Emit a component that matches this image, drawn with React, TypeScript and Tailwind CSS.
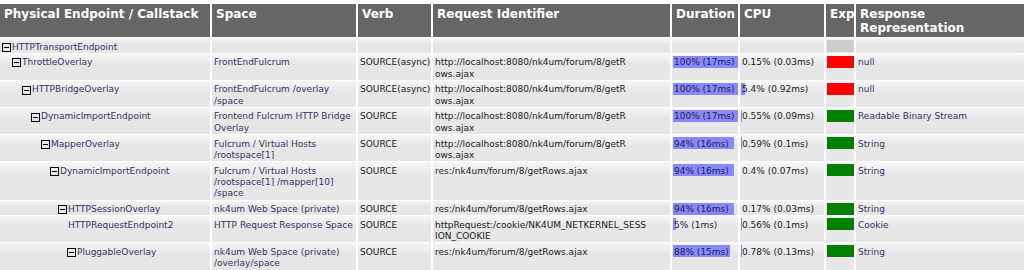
import React from 'react';

type Exp = 'gray' | 'red' | 'green';

interface Row {
  indent: number;
  name: string;
  leaf?: boolean;
  space: string[];
  verb: string;
  req: string[];
  dur?: [string, number];
  cpu?: [string, number];
  exp: Exp;
  resp: string;
}

const URL = ['http://localhost:8080/nk4um/forum/8/getR', 'ows.ajax'];
const RES = ['res:/nk4um/forum/8/getRows.ajax'];

const rows: Row[] = [
  { indent: 1, name: 'HTTPTransportEndpoint', space: [], verb: '', req: [], exp: 'gray', resp: '' },
  { indent: 12, name: 'ThrottleOverlay', space: ['FrontEndFulcrum'], verb: 'SOURCE(async)', req: URL, dur: ['100% (17ms)', 65], cpu: ['0.15% (0.03ms)', 0], exp: 'red', resp: 'null' },
  { indent: 22, name: 'HTTPBridgeOverlay', space: ['FrontEndFulcrum /overlay', '/space'], verb: 'SOURCE(async)', req: URL, dur: ['100% (17ms)', 65], cpu: ['5.4% (0.92ms)', 4], exp: 'red', resp: 'null' },
  { indent: 31, name: 'DynamicImportEndpoint', space: ['Frontend Fulcrum HTTP Bridge', 'Overlay'], verb: 'SOURCE', req: URL, dur: ['100% (17ms)', 65], cpu: ['0.55% (0.09ms)', 1], exp: 'green', resp: 'Readable Binary Stream' },
  { indent: 41, name: 'MapperOverlay', space: ['Fulcrum / Virtual Hosts', '/rootspace[1]'], verb: 'SOURCE', req: URL, dur: ['94% (16ms)', 61], cpu: ['0.59% (0.1ms)', 1], exp: 'green', resp: 'String' },
  { indent: 50, name: 'DynamicImportEndpoint', space: ['Fulcrum / Virtual Hosts', '/rootspace[1] /mapper[10]', '/space'], verb: 'SOURCE', req: RES, dur: ['94% (16ms)', 61], cpu: ['0.4% (0.07ms)', 0], exp: 'green', resp: 'String' },
  { indent: 58, name: 'HTTPSessionOverlay', space: ['nk4um Web Space (private)'], verb: 'SOURCE', req: RES, dur: ['94% (16ms)', 61], cpu: ['0.17% (0.03ms)', 0], exp: 'green', resp: 'String' },
  { indent: 68, name: 'HTTPRequestEndpoint2', leaf: true, space: ['HTTP Request Response Space'], verb: 'SOURCE', req: ['httpRequest:/cookie/NK4UM_NETKERNEL_SESS', 'ION_COOKIE'], dur: ['5% (1ms)', 3], cpu: ['0.56% (0.1ms)', 1], exp: 'green', resp: 'Cookie' },
  { indent: 67, name: 'PluggableOverlay', space: ['nk4um Web Space (private)', '/overlay/space'], verb: 'SOURCE', req: RES, dur: ['88% (15ms)', 57], cpu: ['0.78% (0.13ms)', 1], exp: 'green', resp: 'String' },
];

const headers = ['Physical Endpoint / Callstack', 'Space', 'Verb', 'Request Identifier', 'Duration', 'CPU', 'Exp', 'Response Representation'];

const cell = 'relative overflow-hidden whitespace-nowrap bg-linear-to-b from-[#f6f6f6] to-[#e6e6e6] to-40% pl-[2px] pt-[3.5px] pb-0 leading-[11.3px] text-[9px]';

const Minus = () => (
  <svg width="9" height="9" viewBox="0 0 9 9" className="mr-[1px] shrink-0">
    <rect x="0.5" y="0.5" width="8" height="8" fill="none" stroke="#000" />
    <line x1="2" y1="4.5" x2="7" y2="4.5" stroke="#000" />
  </svg>
);

const Lines = ({ lines }: { lines: string[] }) => (
  <>
    {lines.map((l, i) => (
      <div key={i}>{l}</div>
    ))}
  </>
);

const Bar = ({ v }: { v?: [string, number] }) =>
  v ? (
    <>
      <div className="absolute left-[1px] top-[2px] h-[12px] bg-[#8888ff]" style={{ width: v[1] }} />
      <span className="relative">{v[0]}</span>
    </>
  ) : null;

const expColor: Record<Exp, string> = {
  gray: 'bg-[#cccccc]',
  red: 'bg-[#ff0000]',
  green: 'bg-[#008000]',
};

export default function App() {
  return (
    <div className="w-[1024px] h-[270px] overflow-hidden bg-white pt-[4px] font-['DejaVu_Sans',sans-serif]">
      <div className="grid grid-cols-[210px_144px_73px_237px_66px_84px_28px_168px] gap-x-[2px] gap-y-[1px]">
        {headers.map((h) => (
          <div key={h} className="bg-[#666666] pl-[4px] pt-[2.5px] pb-[1.5px] text-[12px] leading-[14.5px] font-bold text-white">
            {h === 'Response Representation' ? (
              <>
                <div>Response</div>
                <div>Representation</div>
              </>
            ) : (
              h
            )}
          </div>
        ))}
        {rows.map((r, i) => (
          <React.Fragment key={i}>
            <div className={`${cell} text-[#333366]`}>
              <div className="flex items-center" style={{ paddingLeft: r.indent - 2 }}>
                {!r.leaf && <Minus />}
                <span>{r.name}</span>
              </div>
            </div>
            <div className={`${cell} text-[#333366]`}>
              <Lines lines={r.space} />
            </div>
            <div className={`${cell} text-[#1a1a1a]`}>{r.verb}</div>
            <div className={`${cell} text-[#1a1a1a]`}>
              <Lines lines={r.req} />
            </div>
            <div className={`${cell} text-[#222244]`}>
              <Bar v={r.dur} />
            </div>
            <div className={`${cell} text-[#1a1a1a]`}>
              <Bar v={r.cpu} />
            </div>
            <div className={`${cell}`}>
              <div className={`absolute left-[1px] top-[2px] h-[12px] w-[27px] ${expColor[r.exp]}`} />
            </div>
            <div className={`${cell} text-[#333366]`}>{r.resp}</div>
          </React.Fragment>
        ))}
      </div>
    </div>
  );
}
